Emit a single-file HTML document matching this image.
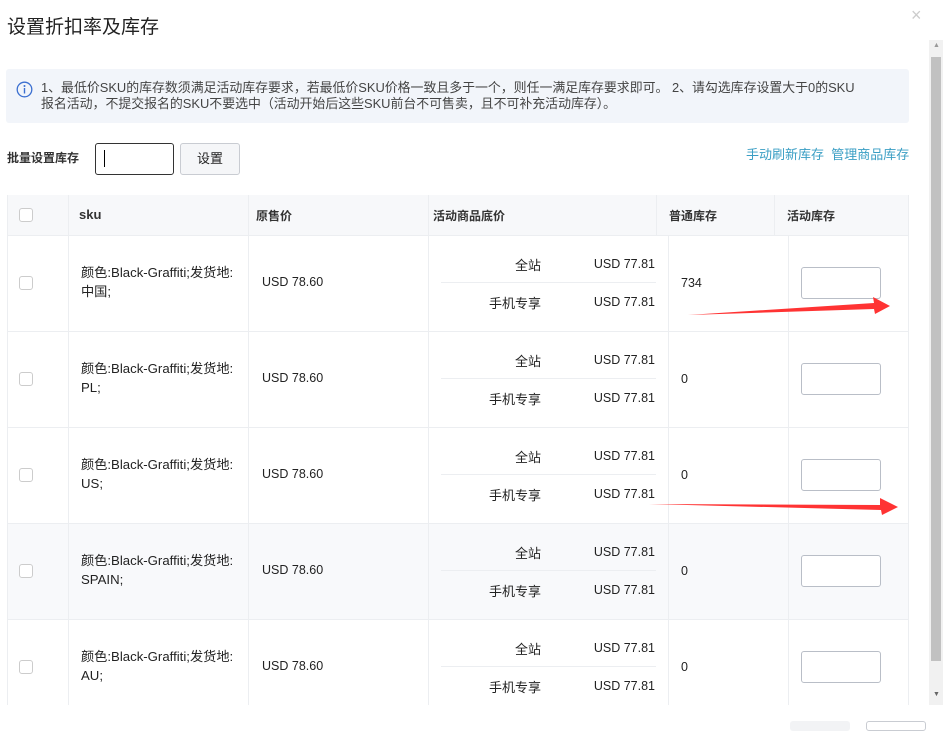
<!DOCTYPE html>
<html><head><meta charset="utf-8"><style>
*{margin:0;padding:0;box-sizing:border-box}
body{width:943px;height:725px;overflow:hidden;background:#fff;font-family:"Liberation Sans","Noto Sans CJK SC",sans-serif;color:#222;position:relative;font-size:12px}
.a{position:absolute;white-space:nowrap}
.cb{position:absolute;width:14px;height:14px;border:1px solid #ccc;border-radius:3px;background:#fff}
.vl{position:absolute;width:1px;background:#eceef1}
.hl{position:absolute;height:1px;background:#eceef1}
.inp{position:absolute;width:80px;height:32px;border:1px solid #b9bec7;border-radius:3px;background:#fff}
</style></head><body>
<div class="a" style="left:7px;top:12px;font-size:19px;color:#222">设置折扣率及库存</div>
<div class="a" style="left:911px;top:5px;font-size:18px;color:#ccc">×</div>
<div class="a" style="left:929px;top:40px;width:14px;height:665px;background:#f1f1f1"></div>
<div class="a" style="left:931px;top:57px;width:10px;height:604px;background:#c1c1c1"></div>
<div class="a" style="left:933px;top:42px;font-size:7px;color:#999">▲</div>
<div class="a" style="left:933px;top:691px;font-size:7px;color:#666">▼</div>
<div class="a" style="left:6px;top:69px;width:903px;height:54px;background:#f2f5fa;border-radius:3px"></div>
<svg class="a" style="left:16px;top:81px" width="17" height="17" viewBox="0 0 17 17"><circle cx="8.5" cy="8.5" r="7.3" fill="none" stroke="#3b6fd0" stroke-width="1.3"/><circle cx="8.5" cy="5" r="1" fill="#3b6fd0"/><rect x="7.8" y="7" width="1.4" height="5.5" fill="#3b6fd0"/></svg>
<div class="a" style="left:41px;top:80px;font-size:12.9px;line-height:16px;color:#444">1、最低价SKU的库存数须满足活动库存要求，若最低价SKU价格一致且多于一个，则任一满足库存要求即可。 2、请勾选库存设置大于0的SKU<br>报名活动，不提交报名的SKU不要选中（活动开始后这些SKU前台不可售卖，且不可补充活动库存）。</div>
<div class="a" style="left:7px;top:149px;font-weight:bold;font-size:12px;color:#333">批量设置库存</div>
<div class="a" style="left:95px;top:143px;width:79px;height:32px;border:1px solid #333;border-radius:3px"></div>
<div class="a" style="left:104px;top:150px;width:1px;height:17px;background:#000"></div>
<div class="a" style="left:180px;top:143px;width:60px;height:32px;border:1px solid #c9ccd2;border-radius:3px;background:#f5f6f8;text-align:center;line-height:30px;font-size:13px">设置</div>
<div class="a" style="left:746px;top:144px;color:#3a9ec4;font-size:13px">手动刷新库存 &nbsp;管理商品库存</div>
<div class="a" style="left:7px;top:195px;width:902px;height:40px;background:#f7f8fa"></div>
<div class="a" style="left:7px;top:523px;width:902px;height:96px;background:#f8f9fb"></div>
<div class="vl" style="left:7px;top:195px;height:510px"></div>
<div class="vl" style="left:68px;top:195px;height:510px"></div>
<div class="vl" style="left:248px;top:195px;height:510px"></div>
<div class="vl" style="left:428px;top:195px;height:510px"></div>
<div class="vl" style="left:668px;top:235px;height:470px"></div>
<div class="vl" style="left:788px;top:235px;height:470px"></div>
<div class="vl" style="left:656px;top:195px;height:40px"></div>
<div class="vl" style="left:774px;top:195px;height:40px"></div>
<div class="vl" style="left:908px;top:195px;height:510px"></div>
<div class="hl" style="left:7px;top:235px;width:902px"></div>
<div class="hl" style="left:7px;top:331px;width:902px"></div>
<div class="hl" style="left:7px;top:427px;width:902px"></div>
<div class="hl" style="left:7px;top:523px;width:902px"></div>
<div class="hl" style="left:7px;top:619px;width:902px"></div>
<div class="cb" style="left:19px;top:208px"></div>
<div class="a" style="left:79px;top:207px;font-weight:bold;font-size:13px;color:#333">sku</div>
<div class="a" style="left:256px;top:207px;font-weight:bold;color:#333">原售价</div>
<div class="a" style="left:433px;top:207px;font-weight:bold;color:#333">活动商品底价</div>
<div class="a" style="left:669px;top:207px;font-weight:bold;color:#333">普通库存</div>
<div class="a" style="left:787px;top:207px;font-weight:bold;color:#333">活动库存</div>
<div id="rows"></div>
<script>
var locs=["中国;","PL;","US;","SPAIN;","AU;"],stock=["734","0","0","0","0"],h="";
for(var i=0;i<5;i++){var t=235+i*96;
h+='<div class="cb" style="left:19px;top:'+(t+41)+'px"></div>';
h+='<div class="a" style="left:81px;top:'+(t+28)+'px;line-height:19px;font-size:13.2px">颜色:Black-Graffiti;发货地:<br>'+locs[i]+'</div>';
h+='<div class="a" style="left:262px;top:'+(t+40)+'px;font-size:12.5px">USD 78.60</div>';
h+='<div class="a" style="left:441px;top:'+(t+20)+'px;width:100px;text-align:right;font-size:13px">全站</div>';
h+='<div class="a" style="left:556px;top:'+(t+22)+'px;width:99px;text-align:right;font-size:12.5px">USD 77.81</div>';
h+='<div class="hl" style="left:441px;top:'+(t+47)+'px;width:215px"></div>';
h+='<div class="a" style="left:441px;top:'+(t+58)+'px;width:100px;text-align:right;font-size:13px">手机专享</div>';
h+='<div class="a" style="left:556px;top:'+(t+60)+'px;width:99px;text-align:right;font-size:12.5px">USD 77.81</div>';
h+='<div class="a" style="left:681px;top:'+(t+41)+'px;font-size:12.5px">'+stock[i]+'</div>';
h+='<div class="inp" style="left:801px;top:'+(t+32)+'px"></div>';}
document.getElementById('rows').innerHTML=h;
</script>
<svg class="a" style="left:0;top:0" width="943" height="725"><polygon points="688,315 874,303 873,297 890,306 875,314 874,309" fill="#f33"/><polygon points="649,504 880,505 880,498 898,507 882,515 881,510" fill="#f33"/></svg>
<div class="a" style="left:0;top:705px;width:943px;height:20px;background:#fff"></div>
<div class="a" style="left:790px;top:721px;width:60px;height:10px;background:#f2f3f5;border-radius:3px"></div>
<div class="a" style="left:866px;top:721px;width:60px;height:10px;border:1px solid #c9ccd2;border-radius:3px"></div>
</body></html>
